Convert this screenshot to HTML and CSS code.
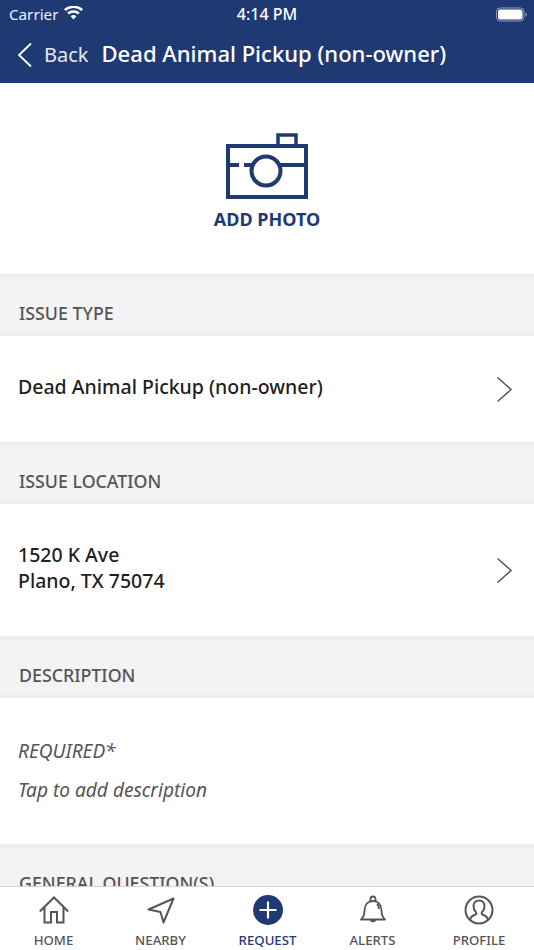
FILE: index.html
```html
<!DOCTYPE html>
<html lang="en">
<head>
<meta charset="utf-8">
<title>Dead Animal Pickup</title>
<link rel="stylesheet" href="styles.css">
</head>
<body>
<div class="app">
  <header class="top">
    <div class="status">
      <div class="status-left"><span>Carrier</span>
        <svg class="wifi" width="19" height="14" viewBox="0 0 19 14"><path d="M9.5 13.5 6.6 10.300a4.400 4.400 0 0 1 5.800 0ZM4.900 8.500 3.200 6.600a9.600 9.600 0 0 1 12.600 0l-1.700 1.900a7 7 0 0 0-9.200 0ZM1.600 4.900 0 3.100a14.400 14.400 0 0 1 19 0l-1.600 1.800a12 12 0 0 0-15.800 0Z" fill="#fff"/></svg>
      </div>
      <div class="time">4:14 PM</div>
      <svg class="battery" width="31" height="15" viewBox="0 0 31 15"><rect x=".5" y="1" width="27.500" height="13" rx="3.500" fill="none" stroke="#8f9dbd"/><rect x="2" y="2.500" width="24.500" height="10" rx="2" fill="#fff"/><path d="M29.500 5.500c1 .3 1.300 1.100 1.300 2s-.3 1.700-1.300 2Z" fill="#8f9dbd"/></svg>
    </div>
    <nav class="navbar">
      <svg class="back-chevron" width="16" height="26" viewBox="0 0 16 26"><path d="M14 1.500 2 13l12 11.500" fill="none" stroke="#fff" stroke-width="1.800"/></svg>
      <span class="back">Back</span>
      <span class="title">Dead Animal Pickup (non-owner)</span>
    </nav>
  </header>

  <main class="content">
    <section class="photo">
      <svg class="camera" width="82" height="66" viewBox="0 0 82 66" fill="none" stroke="#1f3a73" stroke-width="4"><rect x="2" y="13" width="78" height="51"/><rect x="52" y="2" width="18" height="11" stroke-width="3.500"/><circle cx="40" cy="38" r="14.500"/><path d="M2 32h11M18 32h9M54 32h26"/></svg>
      <div class="add-photo">ADD PHOTO</div>
    </section>

    <h2 class="section-head head-type">ISSUE TYPE</h2>
    <div class="row row-type"><div class="row-text">Dead Animal Pickup (non-owner)</div>
      <svg class="chevron" width="17" height="27" viewBox="0 0 17 27"><path d="M1.500 1.500 15 13.500 1.500 25.500" fill="none" stroke="#555" stroke-width="1.500"/></svg></div>

    <h2 class="section-head head-loc">ISSUE LOCATION</h2>
    <div class="row row-loc"><div class="row-text">1520 K Ave<br>Plano, TX 75074</div>
      <svg class="chevron" width="17" height="27" viewBox="0 0 17 27"><path d="M1.500 1.500 15 13.500 1.500 25.500" fill="none" stroke="#555" stroke-width="1.500"/></svg></div>

    <h2 class="section-head head-desc">DESCRIPTION</h2>
    <div class="desc"><div class="req">REQUIRED*</div><div class="hint">Tap to add description</div></div>

    <h2 class="section-head head-q">GENERAL QUESTION(S)</h2>
  </main>

  <footer class="tabs">
    <div class="tab"><svg width="30" height="30" viewBox="0 0 30 30" fill="none" stroke="#555" stroke-width="2"><path d="M.8 16.500 15 2.500l14.200 14M5.500 12.500v15h6.500V17h6v10.500h6.500v-15"/></svg><span>HOME</span></div>
    <div class="tab"><svg width="28" height="30" viewBox="0 0 28 30" fill="none" stroke="#555" stroke-width="2" stroke-linejoin="round"><path d="M1.500 14.500 26.500 3.500 16.500 27.500 13.500 17Z"/></svg><span>NEARBY</span></div>
    <div class="tab active"><svg width="30" height="30" viewBox="0 0 30 30"><circle cx="15" cy="15" r="15" fill="#1f3a73"/><path d="M15 6.500v17M6.500 15h17" stroke="#fff" stroke-width="2.200"/></svg><span>REQUEST</span></div>
    <div class="tab"><svg width="26" height="30" viewBox="0 0 26 30" fill="none" stroke="#555" stroke-width="1.800"><path d="M1 24.500c3-2.500 3.500-5 3.500-9C4.500 9.500 8 6 13 6s8.500 3.500 8.500 9.500c0 4 .5 6.500 3.500 9ZM10.500 6V4a2.500 2.500 0 0 1 5 0v2M10.500 24.500a2.600 2.600 0 0 0 5 0M17 9c1.500 1.500 2 3 2 5" stroke-linejoin="round"/></svg><span>ALERTS</span></div>
    <div class="tab"><svg width="30" height="30" viewBox="0 0 30 30" fill="none" stroke="#555" stroke-width="2"><circle cx="15" cy="15" r="13.500"/><path d="M6 25c.5-3 2.500-4.300 5.200-5.200 1.500-.5 1.500-2 .5-3C10.200 15.300 9.500 13.500 9.500 11c0-3.300 2.300-5.500 5.500-5.500s5.500 2.200 5.500 5.500c0 2.500-.7 4.300-2.200 5.800-1 1-1 2.500.5 3C21.500 20.700 23.500 22 24 25"/></svg><span>PROFILE</span></div>
  </footer>
</div>
</body>
</html>
```

FILE: styles.css
```css
* { box-sizing: border-box; }
html, body { margin: 0; padding: 0; }
body { font-family: "Noto Sans", "Open Sans", sans-serif; background: #f3f3f3; }
.app { width: 534px; height: 950px; overflow: hidden; display: flex; flex-direction: column; background: #f3f3f3; }

.top { height: 83px; background: #1f3a73; color: #fff; flex: none; }
.status { height: 28px; display: flex; align-items: center; justify-content: space-between; padding: 0 7px 0 9px; position: relative; }
.status-left { display: flex; align-items: center; gap: 6px; font-size: 15.200px; color: #eef0f5; }
.wifi { margin-top: -2px; }
.time { position: absolute; left: 0; right: 0; text-align: center; font-size: 16px; font-weight: 500; }
.battery { position: relative; }
.navbar { height: 55px; display: flex; align-items: center; padding: 0 0 2px 17px; }
.back-chevron { flex: none; }
.back { font-size: 20px; margin-left: 11px; color: #e6e9f0; }
.title { font-size: 22.050px; font-weight: 500; margin-left: 13px; white-space: nowrap; margin-top: -4px; }

.content { flex: 1; min-height: 0; overflow: hidden; }
.photo { height: 191px; background: #fff; display: flex; flex-direction: column; align-items: center; padding-top: 50px; }
.add-photo { margin-top: 8px; font-size: 18px; font-weight: 700; color: #1f3a73; line-height: 24px; }

.section-head { margin: 0; font-size: 17.800px; font-weight: 500; color: #555; padding: 0 0 0 19px; display: flex; align-items: center; background: linear-gradient(#ededed, #f3f3f3 8px, #f3f3f3 calc(100% - 6px), #ececec); }
.head-type, .head-loc, .head-desc { height: 62px; padding-top: 16px; }
.head-q { height: 44px; padding-top: 34px; white-space: nowrap; background: linear-gradient(#ededed, #f3f3f3 8px); }

.row { background: #fff; display: flex; align-items: center; justify-content: space-between; padding: 0 21px 0 18px; }
.row-type { height: 106px; }
.row-loc { height: 132px; }
.row-text { font-size: 19.500px; font-weight: 500; line-height: 26px; color: #1f1f1f; margin-top: -5px; }
.desc { height: 146px; background: #fff; padding: 40px 18px 0; font-size: 19.100px; font-style: italic; color: #555; }
.req { line-height: 26px; }
.hint { line-height: 26px; margin-top: 13px; }

.tabs { height: 64px; flex: none; background: #fff; border-top: 1px solid #d5d5d5; display: grid; grid-template-columns: 107px 107px 107px 103px 110px; padding-top: 8px; }
.tab { display: flex; flex-direction: column; align-items: center; height: 55px; font-size: 13.200px; font-weight: 500; color: #555; }
.tab svg { flex: none; }
.tab span { margin-top: 6px; line-height: 18px; }
.tab.active { color: #1f3a73; }
```
